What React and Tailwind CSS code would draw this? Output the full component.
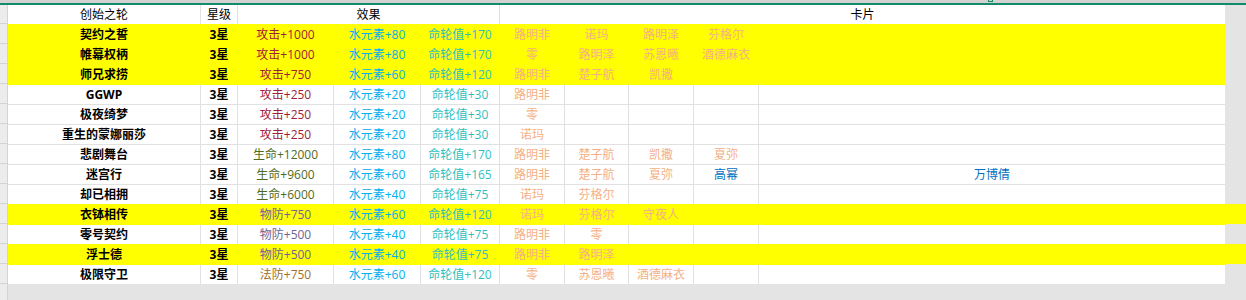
import React from 'react';

const font = { fontFamily: '"Open Sans", "Noto Sans CJK SC", sans-serif' }

const effColor = {
  攻击: 'text-[#a0203a]',
  生命: 'text-[#506a1e]',
  物防: 'text-[#6c6594]',
  法防: 'text-[#a0702a]',
}

const rows = [
  { name: '契约之誓', fill: 'part', eff: '攻击+1000', water: '水元素+80', wheel: '命轮值+170', cards: ['路明非', '诺玛', '路明泽', '芬格尔'] },
  { name: '帷幕权柄', fill: 'part', eff: '攻击+1000', water: '水元素+80', wheel: '命轮值+170', cards: ['零', '路明泽', '苏恩曦', '酒德麻衣'] },
  { name: '师兄求捞', fill: 'part', eff: '攻击+750', water: '水元素+60', wheel: '命轮值+120', cards: ['路明非', '楚子航', '凯撒'] },
  { name: 'GGWP', eff: '攻击+250', water: '水元素+20', wheel: '命轮值+30', cards: ['路明非'] },
  { name: '极夜绮梦', eff: '攻击+250', water: '水元素+20', wheel: '命轮值+30', cards: ['零'] },
  { name: '重生的蒙娜丽莎', eff: '攻击+250', water: '水元素+20', wheel: '命轮值+30', cards: ['诺玛'] },
  { name: '悲剧舞台', eff: '生命+12000', water: '水元素+80', wheel: '命轮值+170', cards: ['路明非', '楚子航', '凯撒', '夏弥'] },
  { name: '迷宫行', eff: '生命+9600', water: '水元素+60', wheel: '命轮值+165', cards: ['路明非', '楚子航', '夏弥', '高幂'], extra: '万博倩' },
  { name: '却已相拥', eff: '生命+6000', water: '水元素+40', wheel: '命轮值+75', cards: ['诺玛', '芬格尔'] },
  { name: '衣钵相传', fill: 'full', eff: '物防+750', water: '水元素+60', wheel: '命轮值+120', cards: ['诺玛', '芬格尔', '守夜人'] },
  { name: '零号契约', eff: '物防+500', water: '水元素+40', wheel: '命轮值+75', cards: ['路明非', '零'] },
  { name: '浮士德', fill: 'full', eff: '物防+500', water: '水元素+40', wheel: '命轮值+75', cards: ['路明非', '路明泽'] },
  { name: '极限守卫', eff: '法防+750', water: '水元素+60', wheel: '命轮值+120', cards: ['零', '苏恩曦', '酒德麻衣'] },
]

const cardWidths = ['w-[65px]', 'w-[64px]', 'w-[65px]', 'w-[65px]']

function Cell({ w, yellow, topYellow, last, className = '', children }) {
  return (
    <div
      className={`${w} h-full flex items-center justify-center whitespace-nowrap border-t ${last ? '' : 'border-r'} ${
        yellow ? 'border-transparent' : topYellow ? 'border-r-[#e1e1e1] border-t-[#ffff00]' : 'border-[#e1e1e1]'
      } ${className}`}
    >
      {children}
    </div>
  )
}

function Row({ row, prevYellow }) {
  const yellow = !!row.fill
  const p = { yellow, topYellow: prevYellow }
  return (
    <div className={`flex h-[20px] ${yellow ? 'bg-[#ffff00]' : 'bg-white'}`}>
      <div className="w-[8px] h-full bg-[#ececec] border-r border-b border-[#d4d4d4] shrink-0" />
      <Cell w="w-[193px]" {...p} className="font-bold text-black">{row.name}</Cell>
      <Cell w="w-[37px]" {...p} className="font-bold text-black">3星</Cell>
      <Cell w="w-[96px]" {...p} className={effColor[row.eff.slice(0, 2)]}>{row.eff}</Cell>
      <Cell w="w-[87px]" {...p} className="text-[#00b0f0]">{row.water}</Cell>
      <Cell w="w-[79px]" {...p} className="text-[#2fbfbf]">{row.wheel}</Cell>
      {cardWidths.map((w, i) => (
        <Cell key={i} w={w} {...p} className={row.cards[i] === '高幂' ? 'text-[#0070c0]' : 'text-[#f4b084]'}>
          {row.cards[i] || ''}
        </Cell>
      ))}
      <Cell w="w-[466px]" {...p} last className="text-[#0070c0]">{row.extra || ''}</Cell>
      <div className={`w-[21px] h-full ${row.fill === 'full' ? 'bg-[#ffff00]' : 'bg-[#e4e4e4]'}`} />
    </div>
  )
}

export default function App() {
  return (
    <div className="w-[1246px] h-[300px] bg-[#e4e4e4] text-[12px] overflow-hidden" style={font}>
      <div className="h-[3px] bg-[#d2d2d2] flex">
        <div className="ml-[988px] w-[5px] h-[2px] border-x border-b border-[#138a6a]" />
      </div>
      <div className="h-[2px] bg-[#138a6a]" />

      {/* header */}
      <div className="flex h-[19px] bg-white text-black">
        <div className="w-[8px] h-full bg-[#ececec] border-r border-b border-[#d4d4d4]" />
        <div className="w-[193px] flex items-center justify-center border-r border-[#e1e1e1]">创始之轮</div>
        <div className="w-[37px] flex items-center justify-center border-r border-[#e1e1e1]">星级</div>
        <div className="w-[262px] flex items-center justify-center border-r border-[#e1e1e1]">效果</div>
        <div className="w-[725px] flex items-center justify-center">卡片</div>
        <div className="w-[21px] bg-[#e4e4e4]" />
      </div>

      {rows.map((row, i) => (
        <Row key={row.name} row={row} prevYellow={i > 0 && !!rows[i - 1].fill} />
      ))}

      <div className="flex h-[16px]">
        <div className="w-[8px] h-full bg-[#ececec] border-r border-[#d4d4d4]" />
      </div>
    </div>
  )
}
